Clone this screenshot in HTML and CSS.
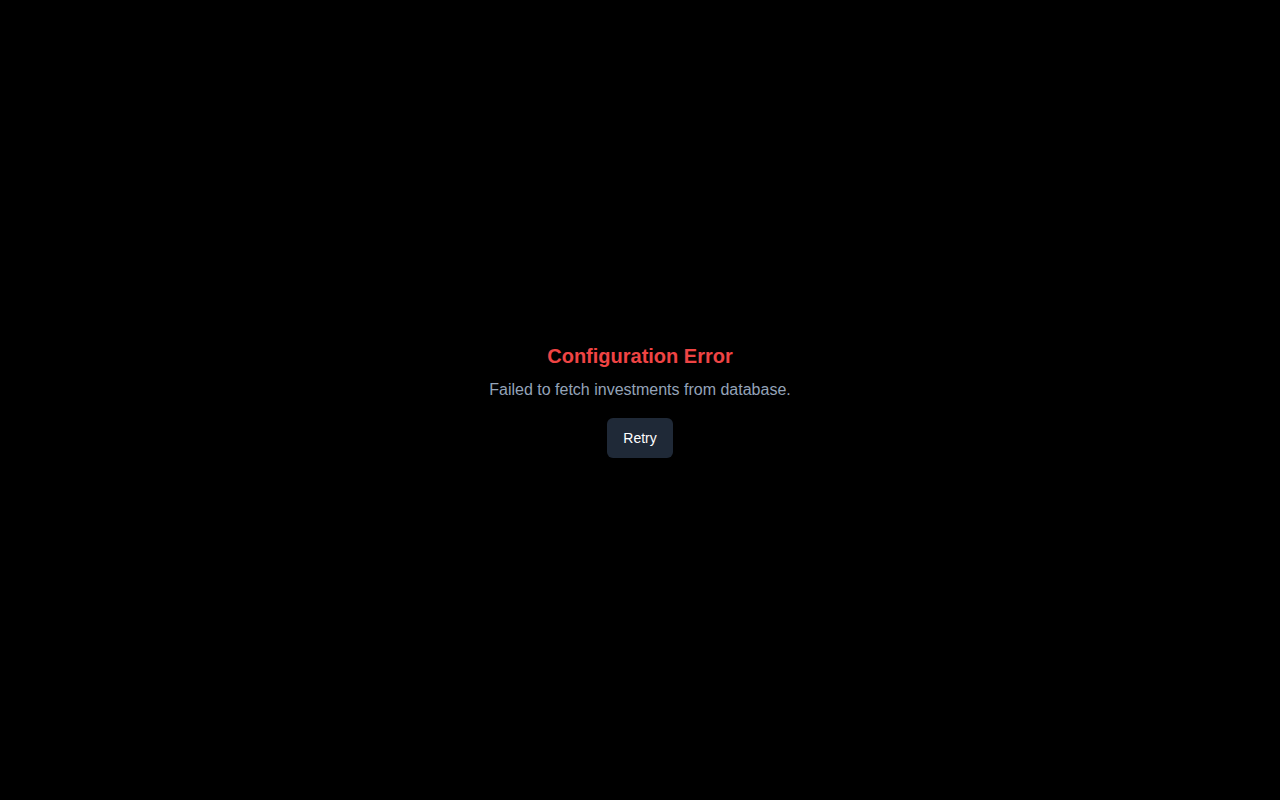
FILE: index.html
```html
<!DOCTYPE html>
<html lang="en">
<head>
<meta charset="utf-8">
<title>Configuration Error</title>
<link rel="stylesheet" href="styles.css">
</head>
<body>
<main class="screen">
  <div class="error-box">
    <h1 class="error-title">Configuration Error</h1>
    <p class="error-message">Failed to fetch investments from database.</p>
    <button class="retry-btn" type="button">Retry</button>
  </div>
</main>
</body>
</html>
```
FILE: styles.css
```css
html, body {
  margin: 0;
  padding: 0;
  background: #000;
  height: 100%;
}
body {
  font-family: "Liberation Sans", Arial, sans-serif;
}
.screen {
  min-height: 100vh;
  display: flex;
  align-items: center;
  justify-content: center;
}
.error-box {
  text-align: center;
}
.error-title {
  margin: 0 0 8px;
  font-size: 20px;
  line-height: 28px;
  font-weight: 700;
  color: #ef4444;
}
.error-message {
  margin: 0 0 16px;
  font-size: 16px;
  line-height: 24px;
  color: #94a3b8;
}
.retry-btn {
  font-family: inherit;
  font-size: 14px;
  line-height: 20px;
  padding: 10px 16px;
  border: 0;
  border-radius: 6px;
  background: #1f2937;
  color: #fff;
  cursor: pointer;
}
```
